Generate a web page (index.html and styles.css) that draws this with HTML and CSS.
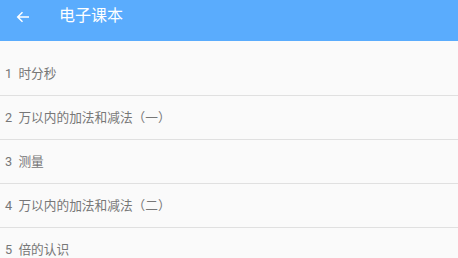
FILE: index.html
```html
<!DOCTYPE html>
<html>
<head>
<meta charset="utf-8">
<link rel="stylesheet" href="styles.css">
</head>
<body>
<div class="header">
  <svg class="back" width="14" height="12" viewBox="0 0 14 12"><path d="M13 6H2M6.5 1.2L1.7 6l4.8 4.8" fill="none" stroke="#fff" stroke-width="1.5"/></svg>
  <span class="title">电子课本</span>
</div>
<ul class="list">
  <li class="item">1&nbsp; 时分秒</li>
  <li class="item">2&nbsp; 万以内的加法和减法（一）</li>
  <li class="item">3&nbsp; 测量</li>
  <li class="item">4&nbsp; 万以内的加法和减法（二）</li>
  <li class="item">5&nbsp; 倍的认识</li>
</ul>
</body>
</html>
```
FILE: styles.css
```css
html, body {
  margin: 0;
  padding: 0;
  background: #fafafa;
  font-family: Roboto, "Noto Sans CJK SC", sans-serif;
  overflow: hidden;
}
.header {
  height: 41px;
  background: #5aacfd;
  display: flex;
  align-items: flex-start;
  padding-top: 5px;
  box-sizing: border-box;
}
.back {
  margin: 6px 0 0 16px;
}
.title {
  color: #fff;
  font-size: 16px;
  line-height: 22px;
  margin-left: 29px;
}
.list {
  list-style: none;
  margin: 11px 0 0;
  padding: 0;
}
.item {
  height: 43px;
  line-height: 43px;
  padding-left: 5px;
  font-size: 12.7px;
  color: #777;
  border-bottom: 1px solid #e0e0e0;
  text-spacing-trim: space-all;
  white-space: nowrap;
}
```
